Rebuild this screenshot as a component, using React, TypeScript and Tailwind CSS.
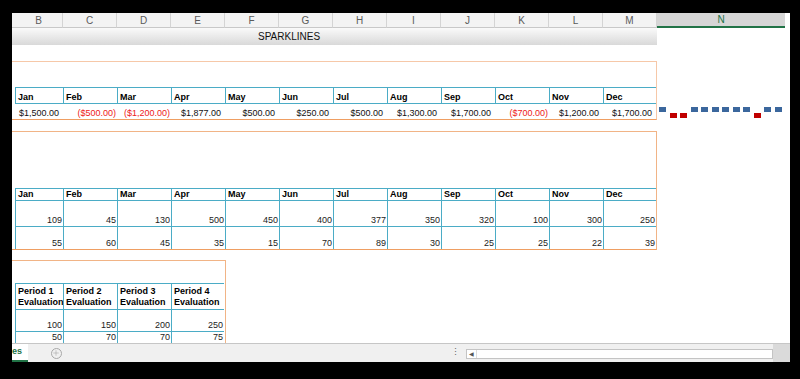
import { Plus } from 'lucide-react';

const letters = ['B', 'C', 'D', 'E', 'F', 'G', 'H', 'I', 'J', 'K', 'L', 'M'];
const months = ['Jan', 'Feb', 'Mar', 'Apr', 'May', 'Jun', 'Jul', 'Aug', 'Sep', 'Oct', 'Nov', 'Dec'];
const money = [1500, -500, -1200, 1877, 500, 250, 500, 1300, 1700, -700, 1200, 1700];
const rowA = [109, 45, 130, 500, 450, 400, 377, 350, 320, 100, 300, 250];
const rowB = [55, 60, 45, 35, 15, 70, 89, 30, 25, 25, 22, 39];

const colW = (i: number) => (i === 0 ? 'w-[48px]' : 'w-[54px]');

function fmt(n: number) {
  const s = '$' + Math.abs(n).toLocaleString('en-US', { minimumFractionDigits: 2 });
  return n < 0 ? `(${s})` : s;
}

function ColumnHeaders() {
  return (
    <div className="flex h-[15px] bg-[#f3f3f3] text-[10px] text-[#5a5a5a]">
      <div className="w-[3px] border-b border-[#c8c8c8]" />
      {letters.map((l, i) => (
        <div
          key={l}
          className={`${colW(i)} flex items-center justify-center border-b border-r border-[#d4d4d4] border-b-[#c8c8c8]`}
        >
          {l}
        </div>
      ))}
      <div className="w-[128px] flex items-center justify-center bg-[#d6d6d6] text-[#217346] border-b-2 border-[#217346]">
        N
      </div>
      <div className="w-[5px] bg-white" />
    </div>
  );
}

function MonthHeader({ h }: { h: string }) {
  return (
    <div className={`flex ${h} border-t border-b border-[#4bacc6]`}>
      {months.map((m, i) => (
        <div
          key={m}
          className={`${i === 11 ? 'w-[53px]' : colW(i)} border-l border-[#4bacc6] pl-[2px] flex items-end font-bold text-[9px] leading-[11px]`}
        >
          {m}
        </div>
      ))}
    </div>
  );
}

function NumRow({ data, h, last }: { data: number[]; h: string; last?: boolean }) {
  return (
    <div className={`flex ${h} ${last ? '' : 'border-b border-[#4bacc6]'}`}>
      {data.map((v, i) => (
        <div
          key={i}
          className={`${i === 11 ? 'w-[53px]' : colW(i)} border-l border-[#4bacc6] flex items-end justify-end pr-[1px] text-[9px] leading-[11px] text-[#222]`}
        >
          {v}
        </div>
      ))}
    </div>
  );
}

function Sparkline() {
  return (
    <div className="flex gap-[3.5px] pl-[2px] h-[15px]">
      {money.map((v, i) => (
        <div
          key={i}
          className={`w-[7px] h-[5px] ${v < 0 ? 'mt-[9px] bg-[#c00000]' : 'mt-[3px] bg-[#3b679d]'}`}
        />
      ))}
    </div>
  );
}

export default function App() {
  return (
    <div
      className="w-[800px] h-[379px] bg-black pl-[12px] pt-[13px] overflow-hidden"
      style={{ fontFamily: '"Liberation Sans", Arial, sans-serif' }}
    >
      <div className="w-[778px] h-[349px] bg-white flex flex-col overflow-hidden text-black">
        <ColumnHeaders />

        <div className="w-[645px] h-[17px] bg-gradient-to-b from-[#fafafa] to-[#d9d9d9] text-[10px] leading-[17px] pl-[246px] text-[#111]">
          SPARKLINES
        </div>
        <div className="h-[16px]" />

        {/* table 1 */}
        <div className="flex">
          <div className="w-[645px] border-t border-r border-[#f6c8a8] border-b border-b-[#ef9e62] flex">
            <div className="w-[3px]" />
            <div className="flex flex-col">
              <div className="h-[25px]" />
              <MonthHeader h="h-[17px]" />
              <div className="flex h-[15px]">
                {money.map((v, i) => (
                  <div
                    key={i}
                    className={`${i === 11 ? 'w-[53px]' : colW(i)} flex items-end justify-end text-[9px] leading-[12px] ${
                      v < 0 ? 'text-[#ee2020] pr-[1px]' : 'pr-[4px] text-[#111]'
                    }`}
                  >
                    {fmt(v)}
                  </div>
                ))}
              </div>
            </div>
          </div>
          <div className="flex flex-col justify-end pb-[1px]">
            <Sparkline />
          </div>
        </div>

        <div className="h-[11px]" />

        {/* table 2 */}
        <div className="w-[645px] border-t border-r border-[#f1b486] border-b border-b-[#ef9e62] flex">
          <div className="w-[3px]" />
          <div className="flex flex-col">
            <div className="h-[56px]" />
            <MonthHeader h="h-[13px]" />
            <NumRow data={rowA} h="h-[26px]" />
            <NumRow data={rowB} h="h-[22px]" last />
          </div>
        </div>

        <div className="h-[11px]" />

        {/* table 3 */}
        <div className="w-[214px] h-[83px] border-t border-r border-[#f1b486] flex">
          <div className="w-[3px]" />
          <div className="flex flex-col">
            <div className="h-[22px]" />
            <div className="flex h-[27px] border-t border-b border-[#4bacc6]">
              {[1, 2, 3, 4].map((p, i) => (
                <div
                  key={p}
                  className={`${i === 3 ? 'w-[53px]' : colW(i)} border-l border-[#4bacc6] pl-[2px] pt-[2px] font-bold text-[9px] leading-[11px]`}
                >
                  Period {p}
                  <br />
                  Evaluation
                </div>
              ))}
            </div>
            <div className="flex h-[23px] border-b border-[#4bacc6]">
              {[100, 150, 200, 250].map((v, i) => (
                <div
                  key={i}
                  className={`${i === 3 ? 'w-[53px]' : colW(i)} border-l border-[#4bacc6] flex items-end justify-end pr-[1px] text-[9px] leading-[11px] text-[#222]`}
                >
                  {v}
                </div>
              ))}
            </div>
            <div className="flex h-[11px]">
              {[50, 70, 70, 75].map((v, i) => (
                <div
                  key={i}
                  className={`${i === 3 ? 'w-[53px]' : colW(i)} border-l border-[#4bacc6] flex items-end justify-end pr-[1px] text-[9px] leading-[11px] text-[#222]`}
                >
                  {v}
                </div>
              ))}
            </div>
          </div>
        </div>

        {/* sheet tabs */}
        <div className="h-[19px] mt-auto flex items-stretch bg-[#f0f0f0] border-t border-[#c6c6c6]">
          <div className="w-[16px] bg-white border-b-2 border-[#217346] text-[9px] font-bold text-[#217346] leading-[14px]">
            es
          </div>
          <div className="w-[56px] flex items-center justify-center">
            <div className="w-[11px] h-[11px] rounded-full border border-[#a8a8a8] flex items-center justify-center">
              <Plus size={8} strokeWidth={1.5} color="#999" />
            </div>
          </div>
          <div className="w-[360px]" />
          <div className="w-[22px] flex items-center justify-center text-[#666] text-[9px]">⋮</div>
          <div className="w-[307px] mt-[5px] h-[10px] bg-white border border-[#c4c4c4] flex">
            <div className="w-[10px] border-r border-[#dcdcdc] flex items-center justify-center text-[6px] text-[#555]">
              ◀
            </div>
          </div>
          <div className="flex-1 bg-[#dadada]" />
        </div>
      </div>
    </div>
  );
}
